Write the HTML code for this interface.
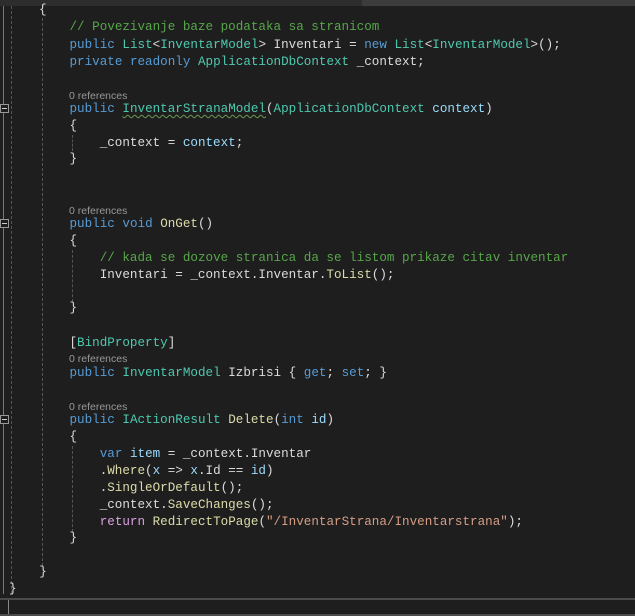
<!DOCTYPE html>
<html><head><meta charset="utf-8"><style>
body{margin:0;width:635px;height:616px;background:#1e1e1e;overflow:hidden;position:relative;font-family:"Liberation Mono",monospace;}
.l{position:absolute;left:9px;height:17px;line-height:17px;font-size:12.6px;color:#dcdcdc;white-space:pre;margin-top:2px;}
.r{position:absolute;left:69px;height:13px;line-height:13px;font-size:10.5px;color:#999;font-family:"Liberation Sans",sans-serif;margin-top:1px;}
.k{color:#569cd6}.t{color:#4ec9b0}.c{color:#57a64a}.p{color:#9cdcfe}.m{color:#dcdcaa}.s{color:#d69d85}.f{color:#d8a0df}
.g{position:absolute;width:0;border-left:1px dashed #555;}
.fold{position:absolute;left:0;width:7px;height:7px;border:1px solid #999;background:#1e1e1e;}
.fold:after{content:"";position:absolute;left:1px;top:3px;width:5px;height:1px;background:#ccc;}
.sq{text-decoration:underline wavy #6a9955;text-underline-offset:2px;text-decoration-thickness:1px}
</style></head><body>
<div style="position:absolute;left:0;top:0;width:635px;height:6px;background:#3c3c3c"></div>
<div style="position:absolute;left:0;top:0;width:362px;height:6px;background:#2d2d2d"></div>
<div style="position:absolute;left:3px;top:6px;width:1px;height:588px;background:#777"></div>
<div class="g" style="left:11px;top:6px;height:588px"></div>
<div class="g" style="left:42px;top:18px;height:548px"></div>
<div class="g" style="left:72px;top:135px;height:16px"></div>
<div class="g" style="left:72px;top:250px;height:52px"></div>
<div class="g" style="left:72px;top:446px;height:86px"></div>
<div class="fold" style="top:104px"></div>
<div class="fold" style="top:219px"></div>
<div class="fold" style="top:415px"></div>

<div class="l" style="top:0px;left:39px">{</div>
<div class="l" style="top:17px">        <span class="c">// Povezivanje baze podataka sa stranicom</span></div>
<div class="l" style="top:35px">        <span class="k">public</span> <span class="t">List</span>&lt;<span class="t">InventarModel</span>&gt; Inventari = <span class="k">new</span> <span class="t">List</span>&lt;<span class="t">InventarModel</span>&gt;();</div>
<div class="l" style="top:52px">        <span class="k">private</span> <span class="k">readonly</span> <span class="t">ApplicationDbContext</span> _context;</div>
<div class="r" style="top:89px">0 references</div>
<div class="l" style="top:99px">        <span class="k">public</span> <span class="t sq">InventarStranaModel</span>(<span class="t">ApplicationDbContext</span> <span class="p">context</span>)</div>
<div class="l" style="top:116px">        {</div>
<div class="l" style="top:133px">            _context = <span class="p">context</span>;</div>
<div class="l" style="top:149px">        }</div>
<div class="r" style="top:204px">0 references</div>
<div class="l" style="top:214px">        <span class="k">public</span> <span class="k">void</span> <span class="m">OnGet</span>()</div>
<div class="l" style="top:231px">        {</div>
<div class="l" style="top:248px">            <span class="c">// kada se dozove stranica da se listom prikaze citav inventar</span></div>
<div class="l" style="top:265px">            Inventari = _context.Inventar.<span class="m">ToList</span>();</div>
<div class="l" style="top:298px">        }</div>
<div class="l" style="top:333px">        [<span class="t">BindProperty</span>]</div>
<div class="r" style="top:352px">0 references</div>
<div class="l" style="top:363px">        <span class="k">public</span> <span class="t">InventarModel</span> Izbrisi { <span class="k">get</span>; <span class="k">set</span>; }</div>
<div class="r" style="top:400px">0 references</div>
<div class="l" style="top:410px">        <span class="k">public</span> <span class="t">IActionResult</span> <span class="m">Delete</span>(<span class="k">int</span> <span class="p">id</span>)</div>
<div class="l" style="top:427px">        {</div>
<div class="l" style="top:444px">            <span class="k">var</span> <span class="p">item</span> = _context.Inventar</div>
<div class="l" style="top:461px">            .<span class="m">Where</span>(<span class="p">x</span> =&gt; <span class="p">x</span>.Id == <span class="p">id</span>)</div>
<div class="l" style="top:478px">            .<span class="m">SingleOrDefault</span>();</div>
<div class="l" style="top:495px">            _context.<span class="m">SaveChanges</span>();</div>
<div class="l" style="top:512px">            <span class="f">return</span> <span class="m">RedirectToPage</span>(<span class="s">"/InventarStrana/Inventarstrana"</span>);</div>
<div class="l" style="top:528px">        }</div>
<div class="l" style="top:562px">    }</div>
<div class="l" style="top:579px">}</div>
<div style="position:absolute;left:0;top:598px;width:635px;height:2px;background:#4a4a4a"></div>
<div style="position:absolute;left:8px;top:600px;width:1px;height:14px;background:#888"></div>
<div style="position:absolute;left:0;top:614px;width:635px;height:2px;background:#4a4a4a"></div>
</body></html>
